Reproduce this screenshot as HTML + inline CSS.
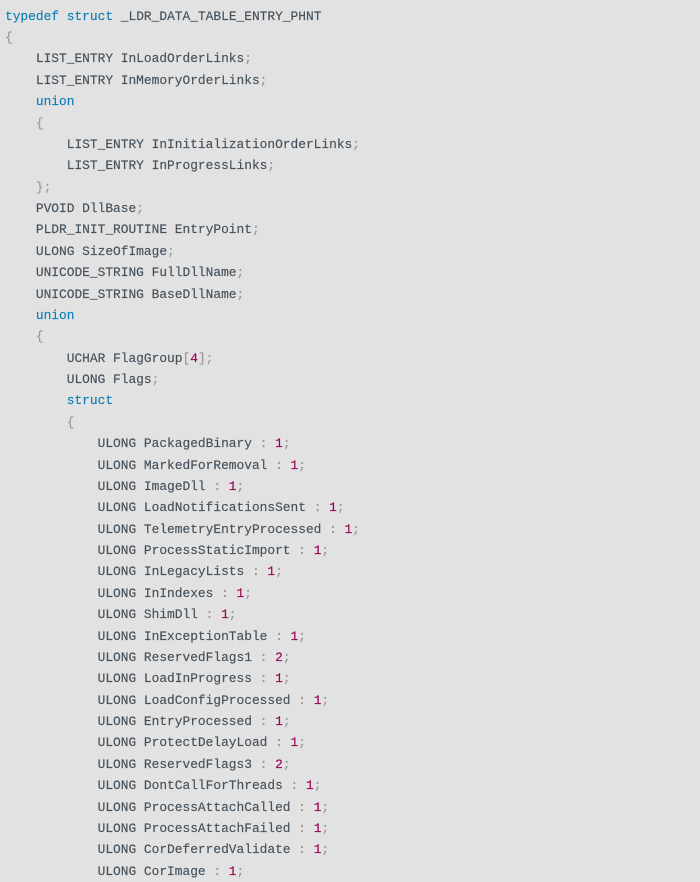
<!DOCTYPE html>
<html>
<head>
<meta charset="utf-8">
<style>
html,body{margin:0;padding:0;width:700px;height:878px;overflow:hidden;background:#e2e2e2}
pre{position:absolute;left:5px;top:5.7px;margin:0;font-family:"Liberation Mono",monospace;font-size:12.87px;line-height:21.375px;color:#45515b;white-space:pre;-webkit-text-stroke:.15px currentColor}
.k{color:#0b7db5}
.p{color:#999}
.n{color:#990055}
.o{color:#9a8f80}
</style>
</head>
<body>
<pre><span class="k">typedef</span> <span class="k">struct</span> _LDR_DATA_TABLE_ENTRY_PHNT
<span class="p">{</span>
    LIST_ENTRY InLoadOrderLinks<span class="p">;</span>
    LIST_ENTRY InMemoryOrderLinks<span class="p">;</span>
    <span class="k">union</span>
    <span class="p">{</span>
        LIST_ENTRY InInitializationOrderLinks<span class="p">;</span>
        LIST_ENTRY InProgressLinks<span class="p">;</span>
    <span class="p">};</span>
    PVOID DllBase<span class="p">;</span>
    PLDR_INIT_ROUTINE EntryPoint<span class="p">;</span>
    ULONG SizeOfImage<span class="p">;</span>
    UNICODE_STRING FullDllName<span class="p">;</span>
    UNICODE_STRING BaseDllName<span class="p">;</span>
    <span class="k">union</span>
    <span class="p">{</span>
        UCHAR FlagGroup<span class="p">[</span><span class="n">4</span><span class="p">];</span>
        ULONG Flags<span class="p">;</span>
        <span class="k">struct</span>
        <span class="p">{</span>
            ULONG PackagedBinary <span class="o">:</span> <span class="n">1</span><span class="p">;</span>
            ULONG MarkedForRemoval <span class="o">:</span> <span class="n">1</span><span class="p">;</span>
            ULONG ImageDll <span class="o">:</span> <span class="n">1</span><span class="p">;</span>
            ULONG LoadNotificationsSent <span class="o">:</span> <span class="n">1</span><span class="p">;</span>
            ULONG TelemetryEntryProcessed <span class="o">:</span> <span class="n">1</span><span class="p">;</span>
            ULONG ProcessStaticImport <span class="o">:</span> <span class="n">1</span><span class="p">;</span>
            ULONG InLegacyLists <span class="o">:</span> <span class="n">1</span><span class="p">;</span>
            ULONG InIndexes <span class="o">:</span> <span class="n">1</span><span class="p">;</span>
            ULONG ShimDll <span class="o">:</span> <span class="n">1</span><span class="p">;</span>
            ULONG InExceptionTable <span class="o">:</span> <span class="n">1</span><span class="p">;</span>
            ULONG ReservedFlags1 <span class="o">:</span> <span class="n">2</span><span class="p">;</span>
            ULONG LoadInProgress <span class="o">:</span> <span class="n">1</span><span class="p">;</span>
            ULONG LoadConfigProcessed <span class="o">:</span> <span class="n">1</span><span class="p">;</span>
            ULONG EntryProcessed <span class="o">:</span> <span class="n">1</span><span class="p">;</span>
            ULONG ProtectDelayLoad <span class="o">:</span> <span class="n">1</span><span class="p">;</span>
            ULONG ReservedFlags3 <span class="o">:</span> <span class="n">2</span><span class="p">;</span>
            ULONG DontCallForThreads <span class="o">:</span> <span class="n">1</span><span class="p">;</span>
            ULONG ProcessAttachCalled <span class="o">:</span> <span class="n">1</span><span class="p">;</span>
            ULONG ProcessAttachFailed <span class="o">:</span> <span class="n">1</span><span class="p">;</span>
            ULONG CorDeferredValidate <span class="o">:</span> <span class="n">1</span><span class="p">;</span>
            ULONG CorImage <span class="o">:</span> <span class="n">1</span><span class="p">;</span></pre>
</body>
</html>
